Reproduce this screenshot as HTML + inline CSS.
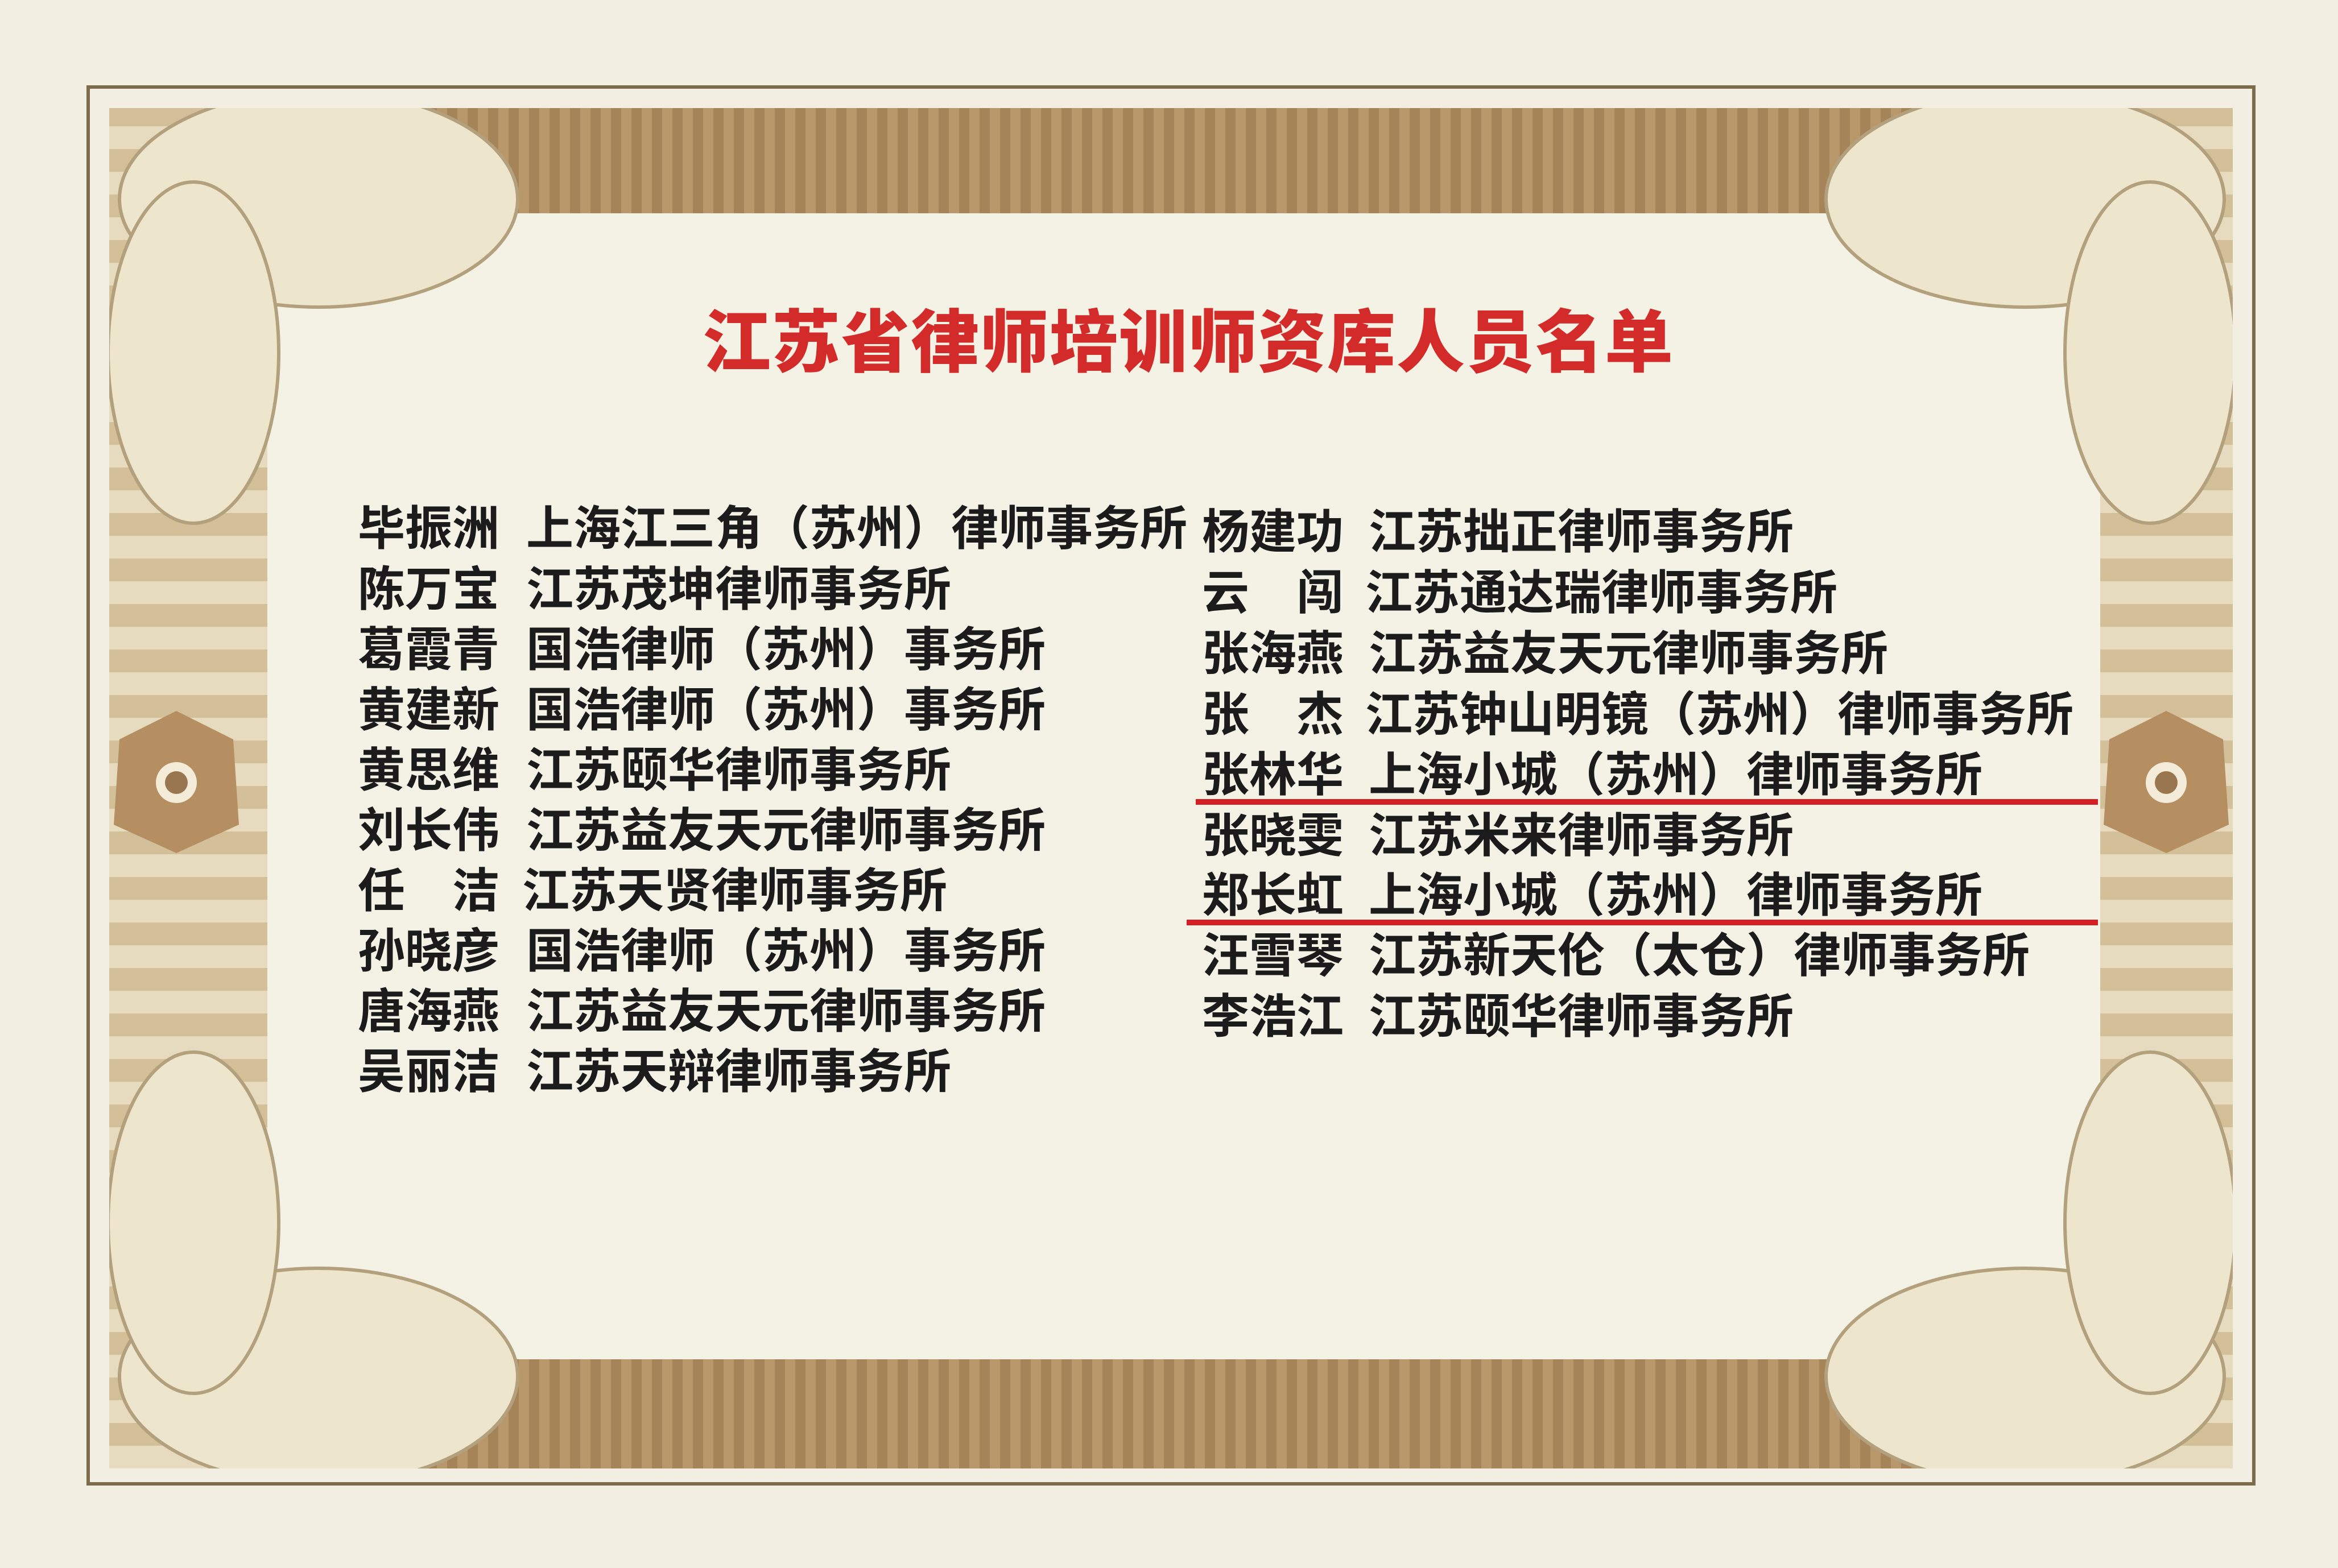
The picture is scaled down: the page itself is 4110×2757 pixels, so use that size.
<!DOCTYPE html>
<html><head><meta charset="utf-8">
<style>
*{margin:0;padding:0;box-sizing:border-box}
body{width:4110px;height:2757px;background:#f2eee2;position:relative;overflow:hidden;font-family:"Liberation Sans","Noto Sans CJK SC",sans-serif}
.abs{position:absolute}
.line{position:absolute;left:152px;top:150px;width:3813px;height:2462px;border:6px solid #7d6c4c}
.frame{left:192px;top:190px;width:3733px;height:2392px;background:#a88a5f}
.band{background:repeating-linear-gradient(90deg,#b8986a 0 18px,#a5845a 18px 36px)}
.side{background:repeating-linear-gradient(0deg,#e6dbbe 0 40px,#d3c099 40px 80px)}
.panel{left:470px;top:375px;width:3222px;height:2015px;background:#f4f1e5}
.t{position:absolute;font-weight:bold;color:#1b1b1b;font-size:83px;line-height:100px;white-space:nowrap}
.title{position:absolute;left:0;width:4178px;top:535px;text-align:center;color:#d32a2a;font-weight:900;font-size:120px;line-height:136px;letter-spacing:2px}
.red{position:absolute;height:10px;background:#d31f24}
</style></head><body>
<div class="line"></div>
<div class="abs frame"></div>
<div class="abs band" style="left:192px;top:190px;width:3733px;height:185px"></div>
<div class="abs band" style="left:192px;top:2390px;width:3733px;height:192px"></div>
<div class="abs side" style="left:192px;top:190px;width:278px;height:2392px"></div>
<div class="abs side" style="left:3692px;top:190px;width:233px;height:2392px"></div>
<div class="abs panel"></div>
<svg class="abs" style="left:0;top:0" width="4110" height="2757">
 <defs><clipPath id="c"><rect x="192" y="190" width="3733" height="2392"/></clipPath></defs>
 <g clip-path="url(#c)" fill="#eee5cd" stroke="#b3a07c" stroke-width="6">
  <ellipse cx="560" cy="350" rx="350" ry="190"/><ellipse cx="340" cy="620" rx="150" ry="300"/>
  <ellipse cx="3560" cy="350" rx="350" ry="190"/><ellipse cx="3780" cy="620" rx="150" ry="300"/>
  <ellipse cx="560" cy="2420" rx="350" ry="190"/><ellipse cx="340" cy="2150" rx="150" ry="300"/>
  <ellipse cx="3560" cy="2420" rx="350" ry="190"/><ellipse cx="3780" cy="2150" rx="150" ry="300"/>
 </g>
 <g fill="#b58f62"><polygon points="310,1250 410,1300 420,1450 310,1500 200,1450 210,1300"/>
 <polygon points="3808,1250 3908,1300 3918,1450 3808,1500 3698,1450 3708,1300"/></g>
 <g fill="#f4ecd8"><circle cx="310" cy="1376" r="36"/><circle cx="3808" cy="1376" r="36"/></g>
 <g fill="#9a7650"><circle cx="310" cy="1376" r="20"/><circle cx="3808" cy="1376" r="20"/></g>
</svg>
<div class="title">江苏省律师培训师资库人员名单</div>

<div class="t" style="left:629px;top:880px">毕振洲</div><div class="t" style="left:925px;top:880px">上海江三角（苏州）律师事务所</div>
<div class="t" style="left:629px;top:987px">陈万宝</div><div class="t" style="left:925px;top:987px">江苏茂坤律师事务所</div>
<div class="t" style="left:629px;top:1093px">葛霞青</div><div class="t" style="left:925px;top:1093px">国浩律师（苏州）事务所</div>
<div class="t" style="left:629px;top:1199px">黄建新</div><div class="t" style="left:925px;top:1199px">国浩律师（苏州）事务所</div>
<div class="t" style="left:629px;top:1305px">黄思维</div><div class="t" style="left:925px;top:1305px">江苏颐华律师事务所</div>
<div class="t" style="left:629px;top:1411px">刘长伟</div><div class="t" style="left:925px;top:1411px">江苏益友天元律师事务所</div>
<div class="t" style="left:629px;top:1517px">任　洁</div><div class="t" style="left:918px;top:1517px">江苏天贤律师事务所</div>
<div class="t" style="left:629px;top:1623px">孙晓彦</div><div class="t" style="left:925px;top:1623px">国浩律师（苏州）事务所</div>
<div class="t" style="left:629px;top:1729px">唐海燕</div><div class="t" style="left:925px;top:1729px">江苏益友天元律师事务所</div>
<div class="t" style="left:629px;top:1835px">吴丽洁</div><div class="t" style="left:925px;top:1835px">江苏天辩律师事务所</div>

<div class="t" style="left:2113px;top:886px">杨建功</div><div class="t" style="left:2406px;top:886px">江苏拙正律师事务所</div>
<div class="t" style="left:2113px;top:993px">云　闯</div><div class="t" style="left:2400px;top:993px">江苏通达瑞律师事务所</div>
<div class="t" style="left:2113px;top:1100px">张海燕</div><div class="t" style="left:2406px;top:1100px">江苏益友天元律师事务所</div>
<div class="t" style="left:2113px;top:1207px">张　杰</div><div class="t" style="left:2400px;top:1207px">江苏钟山明镜（苏州）律师事务所</div>
<div class="t" style="left:2113px;top:1313px">张林华</div><div class="t" style="left:2406px;top:1313px">上海小城（苏州）律师事务所</div>
<div class="t" style="left:2113px;top:1420px">张晓雯</div><div class="t" style="left:2406px;top:1420px">江苏米来律师事务所</div>
<div class="t" style="left:2113px;top:1525px">郑长虹</div><div class="t" style="left:2406px;top:1525px">上海小城（苏州）律师事务所</div>
<div class="t" style="left:2113px;top:1631px">汪雪琴</div><div class="t" style="left:2406px;top:1631px">江苏新天伦（太仓）律师事务所</div>
<div class="t" style="left:2113px;top:1738px">李浩江</div><div class="t" style="left:2406px;top:1738px">江苏颐华律师事务所</div>

<div class="red" style="left:2102px;top:1405px;width:1586px"></div>
<div class="red" style="left:2086px;top:1617px;width:1602px"></div>
</body></html>
